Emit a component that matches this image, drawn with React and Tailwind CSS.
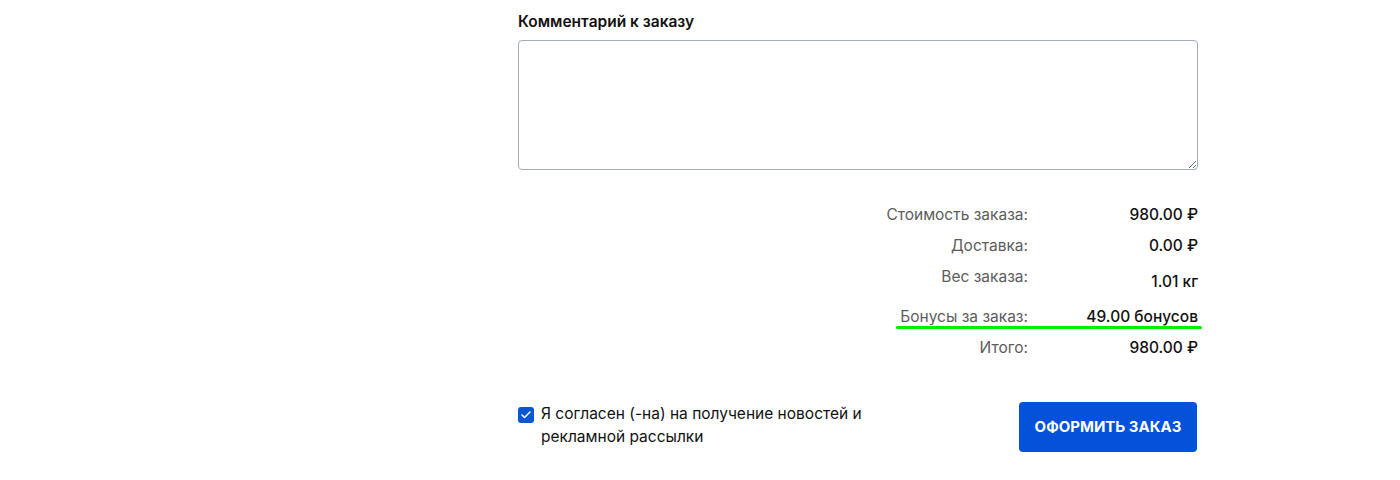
import { Check } from "lucide-react";

const rows = [
  { label: "Стоимость заказа:", value: "980.00 ₽", mt: "mt-[33px]" },
  { label: "Доставка:", value: "0.00 ₽", mt: "mt-[7px]" },
  { label: "Вес заказа:", value: "1.01 кг", mt: "mt-[7px]", shift: true },
  { label: "Бонусы за заказ:", value: "49.00 бонусов", mt: "mt-[11px]", mark: true },
  { label: "Итого:", value: "980.00 ₽", mt: "mt-[7px]" },
];

function App() {
  return (
    <div className="min-h-screen bg-white font-['Inter',sans-serif] text-[#111]">
      <div className="ml-[518px] w-[680px] pt-[12px]">
        <div className="text-[15.5px] font-semibold leading-[20px]">Комментарий к заказу</div>
        <textarea className="mt-[8px] block h-[130px] w-full rounded-[4px] border border-[#a3adbb] outline-none" />

        <div className="flex flex-col">
          {rows.map((r) => (
            <div key={r.label} className={`relative flex justify-end text-[15.5px] leading-[24px] ${r.mt}`}>
              <div className="text-[#5c5c5c]">{r.label}</div>
              <div className={`w-[170px] text-right font-medium ${r.shift ? "pt-[5px]" : ""}`}>{r.value}</div>
              {r.mark && (
                <div className="absolute bottom-0 right-[-4px] h-[3px] w-[306px] rounded-full bg-[#00f000]" />
              )}
            </div>
          ))}
        </div>

        <div className="mt-[42px] flex items-start justify-between">
          <label className="flex items-start gap-[7px]">
            <span className="mt-[5px] flex h-[16px] w-[16px] items-center justify-center rounded-[3px] bg-[#0b57d0]">
              <Check size={12} strokeWidth={3} color="#fff" />
            </span>
            <span className="max-w-[340px] text-[15.5px] leading-[23px]">
              Я согласен (-на) на получение новостей и рекламной рассылки
            </span>
          </label>
          <button className="mr-px h-[50px] w-[178px] rounded-[4px] bg-[#0452d9] text-[15px] font-bold text-white uppercase">
            Оформить заказ
          </button>
        </div>
      </div>
    </div>
  );
}

export default App;
